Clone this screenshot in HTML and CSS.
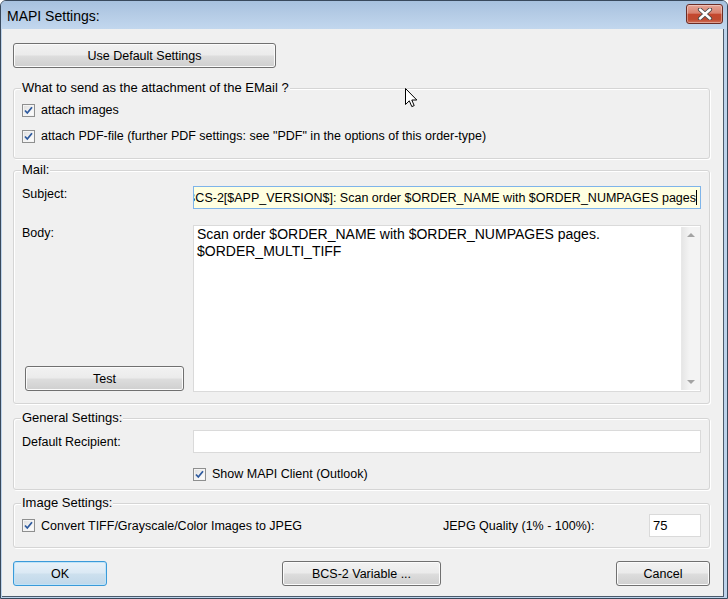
FILE: index.html
```html
<!DOCTYPE html>
<html lang="en">
<head>
    <meta charset="UTF-8">
    <title>MAPI Settings</title>
    <link rel="stylesheet" href="styles.css">
</head>
<body>
    <div class="window">
        <div class="titlebar">
            <span class="title">MAPI Settings:</span>
            <span class="close">
                <svg width="16" height="12" viewBox="0 0 16 12">
                    <path d="M3 1.5 L13 10.5 M13 1.5 L3 10.5" stroke="#4a4a4a" stroke-width="4.2" stroke-linecap="round"/>
                    <path d="M3 1.5 L13 10.5 M13 1.5 L3 10.5" stroke="#ffffff" stroke-width="2.4" stroke-linecap="round"/>
                </svg>
            </span>
        </div>
        <div class="client">
            <div class="top_row">
                <button class="btn btn_default_set">Use Default Settings</button>
            </div>

            <div class="group group_attach">
                <div class="group_title">What to send as the attachment of the EMail ?</div>
                <label class="chk"><span class="box"><svg width="11" height="11" viewBox="0 0 11 11"><path d="M2 5.5 L4.3 8 L9 2.3" fill="none" stroke="#2e5a9e" stroke-width="1.8"/></svg></span>attach images</label>
                <label class="chk chk_second"><span class="box"><svg width="11" height="11" viewBox="0 0 11 11"><path d="M2 5.5 L4.3 8 L9 2.3" fill="none" stroke="#2e5a9e" stroke-width="1.8"/></svg></span>attach PDF-file (further PDF settings: see "PDF" in the options of this order-type)</label>
            </div>

            <div class="group group_mail">
                <div class="group_title">Mail:</div>
                <div class="form_grid mail_grid">
                    <div class="lbl lbl_subject">Subject:</div>
                    <div class="field subject">
                        <span class="subject_text">BCS-2[$APP_VERSION$]: Scan order $ORDER_NAME with $ORDER_NUMPAGES pages</span><span class="caret"></span>
                    </div>
                    <div class="body_left">
                        <div class="lbl lbl_body">Body:</div>
                        <button class="btn btn_test">Test</button>
                    </div>
                    <div class="field body_box">
                        <div class="body_text">Scan order $ORDER_NAME with $ORDER_NUMPAGES pages.<br>$ORDER_MULTI_TIFF</div>
                        <div class="vscroll">
                            <span class="arr arr_up"></span>
                            <span class="arr arr_down"></span>
                        </div>
                    </div>
                </div>
            </div>

            <div class="group group_general">
                <div class="group_title">General Settings:</div>
                <div class="form_grid general_grid">
                    <div class="lbl lbl_recipient">Default Recipient:</div>
                    <div class="field recipient"></div>
                    <div></div>
                    <label class="chk chk_outlook"><span class="box"><svg width="11" height="11" viewBox="0 0 11 11"><path d="M2 5.5 L4.3 8 L9 2.3" fill="none" stroke="#2e5a9e" stroke-width="1.8"/></svg></span>Show MAPI Client (Outlook)</label>
                </div>
            </div>

            <div class="group group_image">
                <div class="group_title">Image Settings:</div>
                <div class="image_row">
                    <label class="chk"><span class="box"><svg width="11" height="11" viewBox="0 0 11 11"><path d="M2 5.5 L4.3 8 L9 2.3" fill="none" stroke="#2e5a9e" stroke-width="1.8"/></svg></span>Convert TIFF/Grayscale/Color Images to JPEG</label>
                    <span class="jpeg_lbl">JEPG Quality (1% - 100%):</span>
                    <div class="field jpeg_val">75</div>
                </div>
            </div>

            <div class="bottom_row">
                <button class="btn btn_ok">OK</button>
                <button class="btn btn_var">BCS-2 Variable ...</button>
                <button class="btn btn_cancel">Cancel</button>
            </div>

            <!-- mouse pointer -->
            <svg class="cursor" width="13" height="21" viewBox="0 0 13 21">
                <path d="M0.5 0.5 L0.5 16.5 L4.3 12.8 L6.8 18.6 L9.2 17.6 L6.8 12 L11.8 12 Z" fill="#ffffff" stroke="#000000" stroke-width="1"/>
            </svg>
        </div>
    </div>
</body>
</html>
```

FILE: styles.css
```css
*{
    margin:0;
    padding:0;
    box-sizing: border-box;
}
body{
    font-family: "Liberation Sans", Arial, sans-serif;
    font-size: 12.5px;
    color: #000;
    background: #ffffff;
}
.window{
    width: 728px;
    height: 599px;
    background: #bdd3eb;
    border: 1px solid #39495c;
    border-radius: 6px 6px 0 0;
    overflow: hidden;
}
.titlebar{
    height: 28px;
    display: flex;
    align-items: center;
    justify-content: space-between;
    padding: 0 4px 0 6px;
    background: linear-gradient(#a7c1de 0%, #b4cbe5 45%, #c2d7ee 100%);
}
.title{
    font-size: 14px;
    padding-top: 1px;
}
.close{
    width: 37px;
    height: 20px;
    margin-top: -3px;
    display: flex;
    align-items: center;
    justify-content: center;
    border: 1px solid #6b2c25;
    border-radius: 3px;
    background: linear-gradient(#e6a495 0%, #d8816f 45%, #c4472f 52%, #bf4a30 80%, #d0705a 100%);
    box-shadow: inset 0 0 0 1px rgba(255,255,255,0.35);
}
.client{
    position: relative;
    width: 722px;
    height: 568px;
    margin-left: 1px;
    background: #f0f0f0;
    border-bottom: 1px solid #4b5a6b;
    border-right: 1px solid #4b5a6b;
}
.top_row{
    padding: 14px 0 0 11px;
}

/* buttons */
.btn{
    height: 25px;
    font-family: inherit;
    font-size: 12.5px;
    color: #000;
    border: 1px solid #707070;
    border-radius: 3px;
    background: linear-gradient(#f2f2f2 0%, #ebebeb 48%, #dddddd 52%, #cfcfcf 100%);
    box-shadow: inset 0 0 0 1px #fbfbfb;
}
.btn_default_set{
    width: 263px;
}
.btn_test{
    width: 159px;
    margin-left: 3px;
    margin-bottom: 1px;
}
.btn_ok{
    width: 94px;
    border-color: #3a9ad9;
    background: linear-gradient(#e8f2f9 0%, #dbe9f4 48%, #cde0ee 52%, #c0d8ea 100%);
    box-shadow: inset 0 0 0 1px #bfe3f8;
}
.btn_var{
    width: 159px;
}
.btn_cancel{
    width: 94px;
}

/* group boxes */
.group{
    width: 697px;
    margin-left: 11px;
    border: 1px solid #d5d5d5;
    border-radius: 3px;
    box-shadow: inset 1px 1px 0 #ffffff, 1px 1px 0 #ffffff;
    padding: 0 7px 0 8px;
}
.group_title{
    width: fit-content;
    font-size: 13px;
    line-height: 15px;
    margin: -9px 0 0 -1px;
    padding: 0 1px;
    background: #f0f0f0;
}
.group_attach{
    margin-top: 20px;
    padding-bottom: 12px;
}
.group_mail{
    margin-top: 11px;
    padding-bottom: 11px;
}
.group_general{
    margin-top: 14px;
    padding-bottom: 5px;
}
.group_image{
    margin-top: 13px;
    padding-bottom: 10px;
}

/* checkboxes */
.chk{
    display: flex;
    align-items: center;
    height: 20px;
    white-space: nowrap;
}
.group_attach .chk{
    margin-top: 5px;
}
.group_attach .chk_second{
    margin-top: 6px;
}
.box{
    width: 13px;
    height: 13px;
    margin-right: 6px;
    display: flex;
    align-items: center;
    justify-content: center;
    border: 1px solid #8e8f8f;
    background: linear-gradient(135deg, #dcdcdc 0%, #f4f4f4 60%, #ffffff 100%);
    box-shadow: inset 0 0 0 1px #f4f4f4;
}

/* text fields */
.form_grid{
    display: grid;
    grid-template-columns: 171px 508px;
}
.mail_grid{
    margin-top: 9px;
    grid-template-rows: 23px 167px;
    row-gap: 16px;
}
.lbl{
    line-height: 15px;
}
.lbl_subject{
    padding-top: 1px;
}
.lbl_body{
    padding-top: 1px;
}
.field{
    border: 1px solid #abadb3;
    background: #ffffff;
}
.subject{
    display: flex;
    justify-content: flex-end;
    align-items: center;
    overflow: hidden;
    white-space: nowrap;
    padding-right: 3px;
    font-size: 12.5px;
    background: #ffffe1;
    border-color: #7eb4ea;
}
.caret{
    display: inline-block;
    width: 1px;
    height: 15px;
    background: #000;
    flex: none;
}
.body_left{
    display: flex;
    flex-direction: column;
    justify-content: space-between;
    align-items: flex-start;
}
.body_box{
    display: flex;
    justify-content: space-between;
    border-color: #dadada;
}
.body_text{
    padding: 0 0 0 3px;
    font-size: 14px;
    line-height: 17px;
}
.vscroll{
    width: 19px;
    margin: 1px 0 1px 0;
    display: flex;
    flex-direction: column;
    justify-content: space-between;
    align-items: center;
    padding: 6px 0;
    background: linear-gradient(90deg, #e6e6e6, #f3f3f3 40%, #f3f3f3);
    border-left: 1px solid #e8e8e8;
}
.arr{
    width: 0;
    height: 0;
    border-left: 4px solid transparent;
    border-right: 4px solid transparent;
}
.arr_up{
    border-bottom: 4px solid #a3a3a3;
}
.arr_down{
    border-top: 4px solid #a3a3a3;
}
.general_grid{
    margin-top: 5px;
    grid-template-rows: 23px 20px;
    row-gap: 11px;
}
.lbl_recipient{
    padding-top: 5px;
}
.recipient{
    border-color: #dadada;
}

.image_row{
    display: flex;
    align-items: center;
    height: 23px;
    margin-top: 4px;
}
.jpeg_lbl{
    width: 206px;
    margin-left: auto;
}
.jpeg_val{
    width: 52px;
    height: 23px;
    padding: 3px 0 0 3px;
    margin-right: 1px;
    font-size: 13px;
    border-color: #dadada;
}

.bottom_row{
    display: flex;
    justify-content: space-between;
    width: 697px;
    margin: 13px 0 0 11px;
}

.cursor{
    position: absolute;
    left: 403px;
    top: 59px;
}
```
